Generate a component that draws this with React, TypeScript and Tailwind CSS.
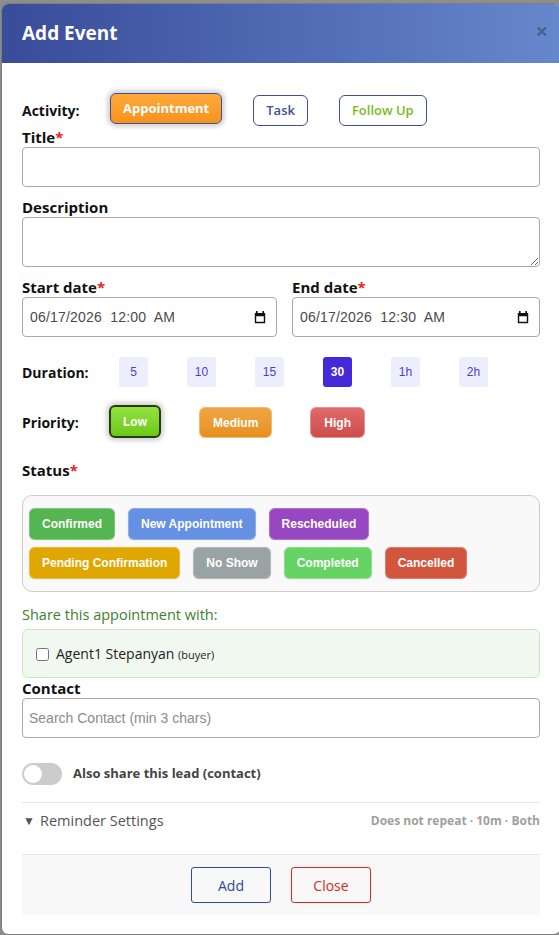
import React, { useState } from 'react';

// Option lists for the event form
const ACTIVITIES = [
    { key: 'appointment', label: 'Appointment', text: 'text-[#3d4f9e]' },
    { key: 'task', label: 'Task', text: 'text-[#3d4f9e]' },
    { key: 'followup', label: 'Follow Up', text: 'text-[#7cbb1f]' },
];

const DURATIONS = ['5', '10', '15', '30', '1h', '2h'];

const PRIORITIES = [
    { key: 'low', label: 'Low', cls: 'bg-linear-to-b from-[#93e240] to-[#6cc913] border-2 border-[#26390f] px-[12px] h-[33px]' },
    { key: 'medium', label: 'Medium', cls: 'bg-linear-to-b from-[#efa23a] to-[#e68a10] border border-[#f3b869] px-[13px] h-[31px]' },
    { key: 'high', label: 'High', cls: 'bg-linear-to-b from-[#df6262] to-[#cc4343] border border-[#e88b8b] px-[13px] h-[31px]' },
];

const STATUSES = [
    { label: 'Confirmed', bg: 'bg-[#55b550]' },
    { label: 'New Appointment', bg: 'bg-[#6690e4]' },
    { label: 'Rescheduled', bg: 'bg-[#9747c1]' },
    { label: 'Pending Confirmation', bg: 'bg-[#e0a700]' },
    { label: 'No Show', bg: 'bg-[#9aa3a4]' },
    { label: 'Completed', bg: 'bg-[#66d465]' },
    { label: 'Cancelled', bg: 'bg-[#d2553e]' },
];

const arial = "font-['Liberation_Sans',Arial,sans-serif]";

const Required = () => <span className="text-[#e4261b]">*</span>;

const FieldLabel: React.FC<{ children: React.ReactNode; required?: boolean }> = ({ children, required }) => (
    <div className="h-[20px] leading-[20px] text-[15px] font-bold text-[#111]">
        {children}
        {required && <Required />}
    </div>
);

// Chrome-style calendar glyph used inside the date fields
const CalendarIcon = () => (
    <svg width="12" height="13" viewBox="0 0 12 13" className="shrink-0">
        <rect x="2" y="0" width="1.6" height="2.5" fill="#111" />
        <rect x="8.4" y="0" width="1.6" height="2.5" fill="#111" />
        <path d="M0.8 2h10.4v10.2H0.8z M2.2 5.2v5.6h7.6V5.2z" fill="#111" fillRule="evenodd" />
    </svg>
);

const DateField: React.FC<{ value: string }> = ({ value }) => (
    <div className="h-[40px] border border-[#a9a9a9] rounded-[4px] flex items-center justify-between pl-[7px] pr-[10px] bg-white">
        <span className={`${arial} text-[14px] text-[#4a4a4a] tracking-[0.2px] whitespace-pre`}>{value}</span>
        <CalendarIcon />
    </div>
);

const App: React.FC = () => {
    const [activity, setActivity] = useState('appointment');
    const [duration, setDuration] = useState('30');
    const [priority, setPriority] = useState('low');
    const [shareLead, setShareLead] = useState(false);

    return (
        <div className="h-[935px] w-[559px] overflow-hidden bg-[#8e8e8e] pt-[4px] pl-[2px] font-['Open_Sans',sans-serif]">
            <div className="w-[558px] bg-white rounded-[6px] overflow-hidden shadow-[0_0_2px_rgba(0,0,0,0.4)]">
                {/* Header */}
                <div className="h-[59px] flex items-center justify-between pl-5 pr-[12px] bg-linear-to-r from-[#394c9a] to-[#6787cc]">
                    <h2 className="text-white text-[19px] font-bold">Add Event</h2>
                    <span className="text-[22px] font-bold leading-none text-black/30 -translate-y-[4px]">×</span>
                </div>

                <div className="px-5 pt-[31px] pb-[19px]">
                    {/* Activity */}
                    <div className="flex items-center h-[33px]">
                        <div className="w-[88px] text-[14px] font-bold text-[#111]">Activity:</div>
                        <div className="flex items-center gap-[31px]">
                            {ACTIVITIES.map((a) => {
                                const active = activity === a.key;
                                return (
                                    <button
                                        key={a.key}
                                        onClick={() => setActivity(a.key)}
                                        className={
                                            active
                                                ? 'h-[31px] px-[12px] rounded-[6px] border border-[#3d4f9e] bg-linear-to-b from-[#ffa939] to-[#f7931a] text-white text-[13px] font-bold -translate-y-[2px] shadow-[0_0_4px_3px_rgba(0,0,0,0.17)]'
                                                : `h-[31px] px-[12px] rounded-[6px] border border-[#3d4f9e] bg-white ${a.text} text-[13px] font-semibold`
                                        }
                                    >
                                        {a.label}
                                    </button>
                                );
                            })}
                        </div>
                    </div>

                    {/* Title */}
                    <FieldLabel required>Title</FieldLabel>
                    <input className="w-full h-[40px] border border-[#a9a9a9] rounded-[4px] outline-none px-2" />

                    {/* Description */}
                    <div className="mt-[10px]">
                        <FieldLabel>Description</FieldLabel>
                        <textarea className="block w-full h-[50px] border border-[#a9a9a9] rounded-[4px] outline-none px-2" />
                    </div>

                    {/* Dates */}
                    <div className="mt-[10px] grid grid-cols-[255px_1fr] gap-x-[15px]">
                        <div>
                            <FieldLabel required>Start date</FieldLabel>
                            <DateField value="06/17/2026  12:00  AM" />
                        </div>
                        <div>
                            <FieldLabel required>End date</FieldLabel>
                            <DateField value="06/17/2026  12:30  AM" />
                        </div>
                    </div>

                    {/* Duration */}
                    <div className="mt-[20px] flex items-center h-[30px]">
                        <div className="w-[97px] text-[14px] font-bold text-[#111]">Duration:</div>
                        <div className="flex gap-[39px]">
                            {DURATIONS.map((d) => (
                                <button
                                    key={d}
                                    onClick={() => setDuration(d)}
                                    className={`${arial} w-[29px] h-[30px] rounded-[3px] text-[12px] ${
                                        duration === d ? 'bg-[#4529d8] text-white font-bold' : 'bg-[#ecedfd] text-[#4a3fd3]'
                                    }`}
                                >
                                    {d}
                                </button>
                            ))}
                        </div>
                    </div>

                    {/* Priority */}
                    <div className="mt-[19px] flex items-center h-[33px]">
                        <div className="w-[87px] text-[14px] font-bold text-[#111]">Priority:</div>
                        <div className="flex items-center gap-[38px]">
                            {PRIORITIES.map((p) => (
                                <button
                                    key={p.key}
                                    onClick={() => setPriority(p.key)}
                                    className={`${arial} ${p.cls} rounded-[6px] text-white text-[12px] font-bold ${
                                        priority === p.key ? 'shadow-[0_0_4px_3px_rgba(0,0,0,0.17)] -translate-y-[1px]' : 'opacity-95'
                                    }`}
                                >
                                    {p.label}
                                </button>
                            ))}
                        </div>
                    </div>

                    {/* Status */}
                    <div className="mt-[21px]">
                        <FieldLabel required>Status</FieldLabel>
                    </div>
                    <div className="mt-[15px] border border-[#cccccc] rounded-[10px] bg-[#f9f9f9] pt-[12px] pb-[12px] px-[6px] flex flex-wrap gap-x-[13px] gap-y-[7px]">
                        {STATUSES.map((s) => (
                            <span
                                key={s.label}
                                className={`${arial} ${s.bg} h-[32px] px-[12px] flex items-center rounded-[6px] text-white text-[12px] font-bold border border-white/25 shadow-[0_0_1px_rgba(0,0,0,0.25)]`}
                            >
                                {s.label}
                            </span>
                        ))}
                    </div>

                    {/* Share */}
                    <div className="mt-[13px] h-[20px] leading-[20px] text-[14.5px] text-[#40802d]">Share this appointment with:</div>
                    <div className="mt-[4px] h-[49px] border border-[#c9e6c0] bg-[#f1f8ef] rounded-[6px] flex items-center pl-[13px] gap-[7px]">
                        <input type="checkbox" className="w-[13px] h-[13px] m-0 translate-y-[1px]" />
                        <span className="text-[14px] text-[#222]">
                            Agent1 Stepanyan <span className="text-[11px]">(buyer)</span>
                        </span>
                    </div>

                    {/* Contact */}
                    <FieldLabel>Contact</FieldLabel>
                    <input
                        placeholder="Search Contact (min 3 chars)"
                        className={`${arial} w-full h-[40px] border border-[#a9a9a9] rounded-[4px] outline-none px-[6px] text-[14px] placeholder:text-[#8c8c8c]`}
                    />

                    {/* Lead toggle */}
                    <div className="mt-[25px] flex items-center gap-[11px] h-[22px]">
                        <button
                            onClick={() => setShareLead(!shareLead)}
                            className={`w-[40px] h-[22px] rounded-full p-[2px] flex ${shareLead ? 'bg-[#3d4f9e] justify-end' : 'bg-[#cccccc] justify-start'}`}
                        >
                            <span className="w-[18px] h-[18px] rounded-full bg-white" />
                        </button>
                        <span className="text-[13px] font-bold text-[#444]">Also share this lead (contact)</span>
                    </div>

                    {/* Reminder settings */}
                    <div className="mt-[17px] border-t border-[#e6e6e6] pt-[8px] pb-[23px] flex items-center justify-between">
                        <div className="flex items-center h-[20px] text-[#555]">
                            <span className="text-[12px] ml-[1px] w-[17px]">▼</span>
                            <span className="text-[14.5px]">Reminder Settings</span>
                        </div>
                        <span className="text-[12px] font-bold text-[#a0a0a0]">Does not repeat · 10m · Both</span>
                    </div>

                    {/* Footer */}
                    <div className="border-t border-[#e6e6e6] bg-[#f8f8f8] pt-[12px] pb-[12px] flex justify-center gap-[20px]">
                        <button className="w-[80px] h-[36px] border border-[#2f4a9e] rounded-[3px] text-[#2f4a9e] text-[14px]">
                            Add
                        </button>
                        <button className="w-[80px] h-[36px] border border-[#e3261b] rounded-[3px] text-[#e3261b] text-[14px]">
                            Close
                        </button>
                    </div>
                </div>
            </div>
        </div>
    );
};

export default App;
